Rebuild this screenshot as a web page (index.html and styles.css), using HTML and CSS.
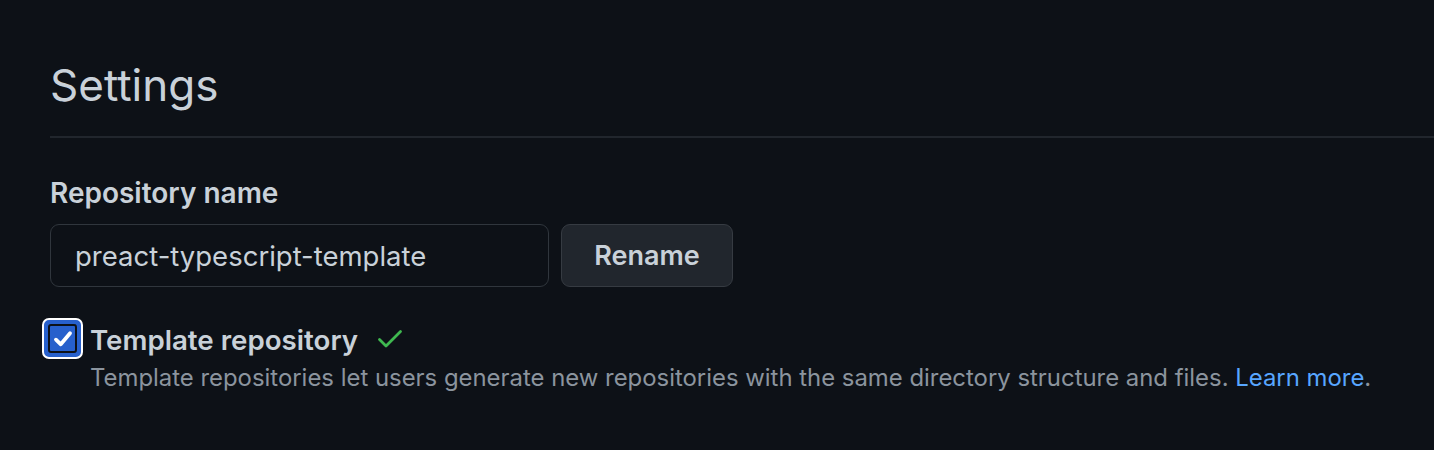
FILE: index.html
```html
<!DOCTYPE html>
<html lang="en">
<head>
<meta charset="utf-8">
<title>Settings</title>
<link rel="stylesheet" href="styles.css">
</head>
<body>
<main class="page">
  <div class="header">
    <h2 class="title">Settings</h2>
  </div>
  <label class="field-label" for="repo-name">Repository name</label>
  <div class="rename-row">
    <input class="text-input" id="repo-name" type="text" value="preact-typescript-template">
    <button class="btn" type="button">Rename</button>
  </div>
  <div class="check-row">
    <span class="checkbox">
      <span class="checkbox-inner">
        <svg width="22" height="22" viewBox="0 0 20 20"><path d="M3.6 10.6 L8 14.8 L16.4 4.8" fill="none" stroke="#fff" stroke-width="3.4" stroke-linecap="round" stroke-linejoin="round"/></svg>
      </span>
    </span>
    <span class="check-label">Template repository</span>
    <svg class="saved" width="26" height="22" viewBox="0 0 26 22"><path d="M2.5 11.5 L9 18 L23.5 3.5" fill="none" stroke="#3fb950" stroke-width="2.8" stroke-linecap="round" stroke-linejoin="round"/></svg>
  </div>
  <p class="note">Template repositories let users generate new repositories with the same directory structure and files. <a class="link" href="#">Learn more</a>.</p>
</main>
</body>
</html>
```
FILE: styles.css
```css
html, body {
  margin: 0;
  background: #0d1117;
}
body {
  font-family: Inter, "Noto Sans", "Liberation Sans", sans-serif;
  color: #c9d1d9;
}
.page {
  padding: 58px 0 0 50px;
}
.header {
  border-bottom: 2px solid #21262d;
  padding-bottom: 23px;
}
.title {
  margin: 0;
  font-size: 44px;
  line-height: 55px;
  font-weight: 400;
  color: #c9d1d9;
}
.field-label {
  display: block;
  margin-top: 37px;
  font-size: 28px;
  line-height: 36px;
  font-weight: 600;
  color: #c9d1d9;
}
.rename-row {
  display: flex;
  gap: 12px;
  margin-top: 13px;
}
.text-input {
  box-sizing: border-box;
  width: 499px;
  height: 63px;
  padding: 0 24px;
  border: 1.5px solid #30363d;
  border-radius: 9px;
  background: #0d1117;
  color: #c9d1d9;
  font-family: inherit;
  font-size: 27.5px;
  outline: none;
}
.btn {
  box-sizing: border-box;
  width: 172px;
  height: 63px;
  border: 1.5px solid #363b42;
  border-radius: 9px;
  background: #21262d;
  color: #c9d1d9;
  font-family: inherit;
  font-size: 27px;
  font-weight: 600;
}
.check-row {
  display: flex;
  align-items: center;
  margin-top: 31px;
  margin-left: -8px;
}
.checkbox {
  box-sizing: border-box;
  width: 41px;
  height: 41px;
  border: 2px solid #ffffff;
  border-radius: 7px;
  background: #2760cc;
  padding: 4px;
  display: flex;
}
.checkbox-inner {
  flex: 1;
  border: 2px solid #0d1117;
  border-radius: 3px;
  background: #2760cc;
  display: flex;
  align-items: center;
  justify-content: center;
}
.check-label {
  margin-left: 7px;
  padding-top: 2px;
  font-size: 27.7px;
  line-height: 36px;
  font-weight: 600;
  color: #c9d1d9;
}
.saved {
  margin-left: 19px;
}
.note {
  margin: 3px 0 0;
  padding-left: 40px;
  font-size: 23.9px;
  line-height: 32px;
  color: #8b949e;
}
.link {
  color: #58a6ff;
  text-decoration: none;
}
```
